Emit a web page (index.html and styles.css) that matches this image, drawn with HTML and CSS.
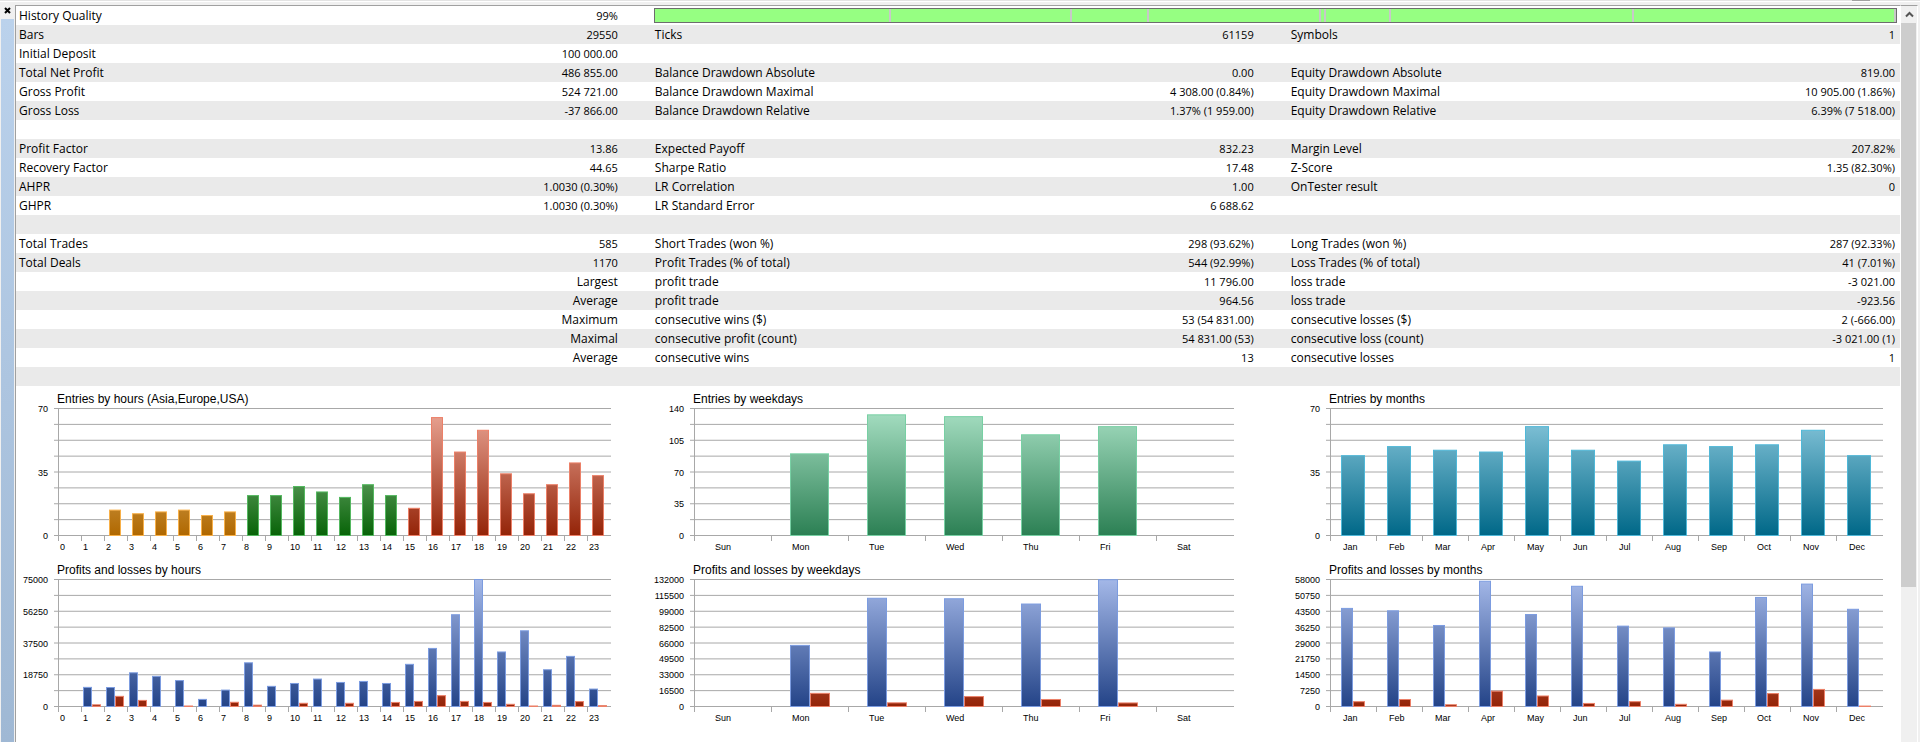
FILE: index.html
```
<!DOCTYPE html>
<html lang="en">
<head>
    <meta charset="UTF-8">
    <title>Strategy Tester Report</title>
    <link rel="stylesheet" href="styles.css">
</head>
<body>
    <div class="window-edge"><span class="edge-mark"></span></div>
    <div class="tester">
        <aside class="side">
            <button class="close-btn" type="button" aria-label="Close">
                <svg width="7" height="7" viewBox="0 0 7 7"><path d="M1 1L6 6M6 1L1 6" stroke="#000" stroke-width="2"/></svg>
            </button>
            <div class="side-caption"></div>
        </aside>

        <main class="report">
            <table class="stats">
                <colgroup>
                    <col class="col-label"><col class="col-value">
                    <col class="col-label"><col class="col-value">
                    <col class="col-label"><col>
                </colgroup>
                <tbody>
                    <tr><th>History Quality</th><td>99%</td><td class="quality-cell" colspan="4"><div class="quality" id="quality"></div></td></tr>
                    <tr><th>Bars</th><td>29550</td><th>Ticks</th><td>61159</td><th>Symbols</th><td>1</td></tr>
                    <tr><th>Initial Deposit</th><td>100 000.00</td><th></th><td></td><th></th><td></td></tr>
                    <tr><th>Total Net Profit</th><td>486 855.00</td><th>Balance Drawdown Absolute</th><td>0.00</td><th>Equity Drawdown Absolute</th><td>819.00</td></tr>
                    <tr><th>Gross Profit</th><td>524 721.00</td><th>Balance Drawdown Maximal</th><td>4 308.00 (0.84%)</td><th>Equity Drawdown Maximal</th><td>10 905.00 (1.86%)</td></tr>
                    <tr><th>Gross Loss</th><td>-37 866.00</td><th>Balance Drawdown Relative</th><td>1.37% (1 959.00)</td><th>Equity Drawdown Relative</th><td>6.39% (7 518.00)</td></tr>
                    <tr><td colspan="6"></td></tr>
                    <tr><th>Profit Factor</th><td>13.86</td><th>Expected Payoff</th><td>832.23</td><th>Margin Level</th><td>207.82%</td></tr>
                    <tr><th>Recovery Factor</th><td>44.65</td><th>Sharpe Ratio</th><td>17.48</td><th>Z-Score</th><td>1.35 (82.30%)</td></tr>
                    <tr><th>AHPR</th><td>1.0030 (0.30%)</td><th>LR Correlation</th><td>1.00</td><th>OnTester result</th><td>0</td></tr>
                    <tr><th>GHPR</th><td>1.0030 (0.30%)</td><th>LR Standard Error</th><td>6 688.62</td><th></th><td></td></tr>
                    <tr><td colspan="6"></td></tr>
                    <tr><th>Total Trades</th><td>585</td><th>Short Trades (won %)</th><td>298 (93.62%)</td><th>Long Trades (won %)</th><td>287 (92.33%)</td></tr>
                    <tr><th>Total Deals</th><td>1170</td><th>Profit Trades (% of total)</th><td>544 (92.99%)</td><th>Loss Trades (% of total)</th><td>41 (7.01%)</td></tr>
                    <tr><th></th><td class="word">Largest</td><th>profit trade</th><td>11 796.00</td><th>loss trade</th><td>-3 021.00</td></tr>
                    <tr><th></th><td class="word">Average</td><th>profit trade</th><td>964.56</td><th>loss trade</th><td>-923.56</td></tr>
                    <tr><th></th><td class="word">Maximum</td><th>consecutive wins ($)</th><td>53 (54 831.00)</td><th>consecutive losses ($)</th><td>2 (-666.00)</td></tr>
                    <tr><th></th><td class="word">Maximal</td><th>consecutive profit (count)</th><td>54 831.00 (53)</td><th>consecutive loss (count)</th><td>-3 021.00 (1)</td></tr>
                    <tr><th></th><td class="word">Average</td><th>consecutive wins</th><td>13</td><th>consecutive losses</th><td>1</td></tr>
                    <tr><td colspan="6"></td></tr>
                </tbody>
            </table>

            <section class="charts">
                <svg class="chart" id="entriesHours"></svg>
                <svg class="chart" id="entriesWeekdays"></svg>
                <svg class="chart" id="entriesMonths"></svg>
                <svg class="chart" id="profitHours"></svg>
                <svg class="chart" id="profitWeekdays"></svg>
                <svg class="chart" id="profitMonths"></svg>
            </section>
        </main>

        <div class="scrollbar">
            <button class="scroll-up" type="button" aria-label="Scroll up">
                <svg width="9" height="7" viewBox="0 0 9 7"><path d="M1 5.5L4.5 2L8 5.5" fill="none" stroke="#555" stroke-width="2"/></svg>
            </button>
            <div class="scroll-track">
                <div class="scroll-thumb"></div>
            </div>
        </div>
    </div>

    <script src="charts.js"></script>
</body>
</html>
```
FILE: styles.css
```
* {
    box-sizing: border-box;
}
body {
    margin: 0;
    height: 100vh;
    display: flex;
    flex-direction: column;
    overflow: hidden;
    background-color: #f0f0f0;
    color: #000;
    font-family: "Open Sans", "Noto Sans", sans-serif;
    font-size: 12px;
}
button {
    padding: 0;
    border: none;
    background: none;
    display: flex;
    align-items: center;
    justify-content: center;
}
.window-edge {
    flex: none;
    height: 5px;
    display: flex;
    justify-content: flex-end;
    padding-right: 50px;
    background: linear-gradient(#e3e3e3 1px, #fff 1px, #fff 2px, #f0f0f0 2px);
}
.edge-mark {
    width: 18px;
    height: 1px;
    background-color: #a0a0a0;
}
.tester {
    flex: 1;
    min-height: 0;
    display: flex;
    padding-right: 2px;
}

/* left caption strip */
.side {
    width: 15px;
    display: flex;
    flex-direction: column;
    padding: 0 1px;
}
.close-btn {
    width: 12px;
    height: 11px;
}
.side-caption {
    flex: 1;
    margin-top: 3px;
    background: linear-gradient(#bbd2ec, #9fb8d4);
}

/* statistics */
.report {
    flex: 1;
    border-top: 1px solid #a0a0a0;
    border-left: 1px solid #a0a0a0;
    background-color: #fff;
}
.stats {
    width: 100%;
    table-layout: fixed;
    border-collapse: collapse;
}
.col-label {
    width: 16%;
}
.col-value {
    width: 17.75%;
}
.stats tr {
    height: 19px;
}
.stats tr:nth-child(even) {
    background-color: #eaeaea;
}
.stats th, .stats td {
    padding: 0 5px 0 3px;
    line-height: 18px;
    white-space: nowrap;
}
.stats th {
    font-weight: normal;
    text-align: left;
}
.stats td {
    text-align: right;
    font-size: 11px;
}
.stats td.word {
    font-size: 12px;
}
.stats td:nth-child(2), .stats td:nth-child(4) {
    padding-right: 34px;
}
.stats .quality-cell {
    padding: 0 3px 0 2px;
}
.quality {
    display: flex;
    height: 15px;
    border: 1px solid #6d6d6d;
    background-color: #96ff82;
}
.quality .gap {
    width: 2px;
    background-color: #c8c8c8;
}

/* charts */
.charts {
    display: grid;
    grid-template-columns: 33.75% 33.75% 1fr;
}
.chart {
    display: block;
    width: 100%;
    height: 171px;
    overflow: hidden;
    font-family: "Liberation Sans", Arial, sans-serif;
    font-size: 9px;
}
.chart .title {
    font-size: 12px;
}
.chart .grid {
    stroke: #a8a8a8;
}
.chart .y-label {
    text-anchor: end;
}

/* scrollbar */
.scrollbar {
    width: 18px;
    display: flex;
    flex-direction: column;
    border-top: 1px solid #a0a0a0;
    border-right: 1px solid #fff;
    border-left: 1px solid #fff;
    background-color: #f0f0f0;
}
.scroll-up {
    height: 17px;
}
.scroll-track {
    flex: 1;
}
.scroll-thumb {
    width: 15px;
    height: 78.5%;
    background-color: #cdcdcd;
}
```
FILE: charts.js
```
const SVG_NS = "http://www.w3.org/2000/svg";
const PLOT = { left: 42, top: 22, bottom: 149 };

const COLORS = {
    orange: { top: "#f0d8a8", bottom: "#b06800", line: "#f8b048" },
    green: { top: "#b0d4b0", bottom: "#086408", line: "#54b860" },
    red: { top: "#eca898", bottom: "#942408", line: "#ec8068" },
    mint: { top: "#a8e0c4", bottom: "#2c8054", line: "#78d0a4" },
    teal: { top: "#90cce0", bottom: "#006888", line: "#50b8d8" },
    blue: { top: "#a4b8e8", bottom: "#244488", line: "#7c9ce0" }
};

const hours = Array.from({ length: 24 }, (_, i) => String(i));
const weekdays = ["Sun", "Mon", "Tue", "Wed", "Thu", "Fri", "Sat"];
const months = ["Jan", "Feb", "Mar", "Apr", "May", "Jun", "Jul", "Aug", "Sep", "Oct", "Nov", "Dec"];

// right: space kept free after the plot, labelDx: label offset inside a category
const byHours = { labels: hours, right: 16, labelDx: 2 };
const byWeekdays = { labels: weekdays, right: 28, labelDx: 21 };
const byMonths = { labels: months, right: 16, labelDx: 13 };

const charts = [
    {
        id: "entriesHours", ...byHours, title: "Entries by hours (Asia,Europe,USA)",
        max: 70, yStep: 35, barDx: 5, barWidth: 12,
        series: [{
            values: [0, 0, 14, 12, 13, 14, 11, 13, 22, 22, 27, 24, 21, 28, 22, 15, 65, 46, 58, 34, 23, 28, 40, 33],
            color: i => i < 8 ? "orange" : i < 15 ? "green" : "red"
        }]
    },
    {
        id: "entriesWeekdays", ...byWeekdays, title: "Entries by weekdays",
        max: 140, yStep: 35, barDx: 19, barWidth: 39,
        series: [{ values: [0, 90, 133, 131, 111, 120, 0], color: () => "mint" }]
    },
    {
        id: "entriesMonths", ...byMonths, title: "Entries by months",
        max: 70, yStep: 35, barDx: 11, barWidth: 24,
        series: [{ values: [44, 49, 47, 46, 60, 47, 41, 50, 49, 50, 58, 44], color: () => "teal" }]
    },
    {
        id: "profitHours", ...byHours, title: "Profits and losses by hours",
        max: 75000, yStep: 18750, barDx: 2, barWidth: 9,
        series: [
            {
                values: [0, 11300, 11200, 19900, 17800, 15300, 4200, 9700, 25800, 11900, 13600, 16200,
                    14200, 14800, 13600, 24900, 34300, 54200, 75000, 32200, 44700, 21700, 29600, 10300],
                color: () => "blue"
            },
            {
                values: [0, 1000, 6000, 3600, 0, 300, 0, 2500, 800, 0, 1900, 0,
                    1900, 0, 2400, 3000, 6400, 3000, 2400, 1300, 300, 700, 2900, 500],
                color: () => "red"
            }
        ]
    },
    {
        id: "profitWeekdays", ...byWeekdays, title: "Profits and losses by weekdays",
        max: 132000, yStep: 16500, barDx: 19, barWidth: 20,
        series: [
            { values: [0, 63500, 112500, 112000, 106500, 131800, 0], color: () => "blue" },
            { values: [0, 13700, 3800, 10300, 7300, 3700, 0], color: () => "red" }
        ]
    },
    {
        id: "profitMonths", ...byMonths, title: "Profits and losses by months",
        max: 58000, yStep: 7250, barDx: 11, barWidth: 12,
        series: [
            { values: [44800, 43700, 37000, 57200, 42000, 54900, 36700, 35900, 24900, 49800, 55900, 44400], color: () => "blue" },
            { values: [2200, 3200, 800, 7000, 4800, 1400, 2200, 1000, 2900, 5900, 7800, 200], color: () => "red" }
        ]
    }
];

function add(parent, name, attrs, text) {
    const node = document.createElementNS(SVG_NS, name);
    for (const key in attrs) {
        node.setAttribute(key, attrs[key]);
    }
    if (text !== undefined) {
        node.textContent = text;
    }
    parent.appendChild(node);
    return node;
}

function addGradients(svg, id) {
    const defs = add(svg, "defs", {});
    for (const name in COLORS) {
        const gradient = add(defs, "linearGradient", {
            id: id + "-" + name, gradientUnits: "userSpaceOnUse",
            x1: 0, y1: PLOT.top, x2: 0, y2: PLOT.bottom
        });
        add(gradient, "stop", { offset: 0, "stop-color": COLORS[name].top });
        add(gradient, "stop", { offset: 1, "stop-color": COLORS[name].bottom });
    }
}

function drawChart(chart) {
    const svg = document.getElementById(chart.id);
    svg.innerHTML = "";
    addGradients(svg, chart.id);

    const gutter = chart.labels === months ? 0 : 25;
    const width = Math.round(svg.getBoundingClientRect().width) - gutter;
    const count = chart.labels.length;
    const step = Math.floor((width - PLOT.left - chart.right) / count);
    const height = PLOT.bottom - PLOT.top;
    const right = PLOT.left + step * count + 1;

    add(svg, "text", { class: "title", x: PLOT.left - 1, y: 17 }, chart.title);

    for (let i = 0; i <= 8; i++) {
        const y = PLOT.top + 0.5 + height * i / 8;
        add(svg, "line", { class: "grid", x1: PLOT.left - 4, x2: right, y1: y, y2: y });
    }
    for (let value = 0; value <= chart.max; value += chart.yStep) {
        const y = Math.round(PLOT.bottom - height * value / chart.max);
        add(svg, "text", { class: "y-label", x: PLOT.left - 10, y: y + 4 }, value);
    }

    const axisX = PLOT.left + 0.5;
    add(svg, "line", { class: "grid", x1: axisX, x2: axisX, y1: PLOT.top, y2: PLOT.bottom });

    chart.labels.forEach((label, i) => {
        const x = PLOT.left + step * i;
        add(svg, "line", { class: "grid", x1: x + 0.5, x2: x + 0.5, y1: PLOT.bottom, y2: PLOT.bottom + 6 });
        add(svg, "text", { x: x + chart.labelDx, y: PLOT.bottom + 15 }, label);

        chart.series.forEach((series, n) => {
            const value = series.values[i];
            if (!value) {
                return;
            }
            const color = series.color(i);
            const barHeight = height * value / chart.max;
            add(svg, "rect", {
                x: x + chart.barDx + n * chart.barWidth + 0.5,
                y: PLOT.bottom + 0.5 - barHeight,
                width: chart.barWidth - 1,
                height: barHeight,
                fill: "url(#" + chart.id + "-" + color + ")",
                stroke: COLORS[color].line
            });
        });
    });
}

// history quality: good stretches with thin gaps between them
function drawQuality() {
    const stretches = [234, 179, 75, 171, 3, 63, 241, 260];
    const bar = document.getElementById("quality");
    stretches.forEach(length => {
        const good = document.createElement("div");
        good.style.flex = length + " 1 0";
        const gap = document.createElement("div");
        gap.className = "gap";
        bar.append(good, gap);
    });
}

function drawAll() {
    charts.forEach(drawChart);
}

drawQuality();
drawAll();
window.addEventListener("resize", drawAll);
```
